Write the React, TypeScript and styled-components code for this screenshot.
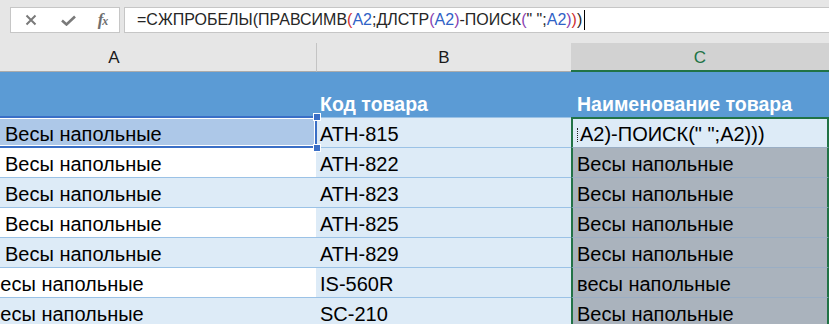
import React from "react";
import styled, { createGlobalStyle } from "styled-components";

const GlobalStyle = createGlobalStyle`
  body {
    margin: 0;
    background: #e6e6e6;
    font-family: "Liberation Sans", Arial, sans-serif;
  }
`;

const Window = styled.div`
  width: 829px;
  height: 324px;
  overflow: hidden;
  background: #e6e6e6;
`;

const FormulaBar = styled.div`
  display: flex;
  align-items: flex-start;
  gap: 4px;
  height: 43px;
  padding: 7px 0 0 10px;
  box-sizing: border-box;
`;

const FnBox = styled.div`
  display: grid;
  grid-template-columns: 39px 36px 33px;
  align-items: center;
  justify-items: center;
  width: 110px;
  height: 26px;
  box-sizing: border-box;
  border: 1px solid #c6c6c6;
  background: #ffffff;
  color: #7a7a7a;
`;

const FxLabel = styled.span`
  font-family: "Liberation Serif", "DejaVu Serif", serif;
  font-style: italic;
  font-weight: bold;
  font-size: 17px;
  line-height: 20px;
  color: #6f6f6f;
  letter-spacing: -1px;
  & small {
    font-size: 12px;
  }
`;

const FormulaInput = styled.div`
  flex: 1;
  height: 26px;
  margin-right: -2px;
  box-sizing: border-box;
  border: 1px solid #c6c6c6;
  background: #ffffff;
  padding-left: 12px;
  font-size: 16px;
  line-height: 24px;
  color: #262626;
  white-space: nowrap;
  display: flex;
  align-items: center;
`;

const Tok = styled.span<{ $c?: string }>`
  color: ${(p) => p.$c || "#262626"};
`;

const Caret = styled.span`
  display: inline-block;
  width: 1px;
  height: 20px;
  margin-left: 2px;
  background: #000000;
`;

const ColumnHeaders = styled.div`
  display: grid;
  grid-template-columns: 316px 255px 258px;
  height: 29px;
`;

const ColHead = styled.div<{ $active?: boolean; $left?: boolean; $shift?: number }>`
  box-sizing: border-box;
  height: 29px;
  padding-top: 3px;
  padding-right: ${(p) => p.$shift || 0}px;
  line-height: 24px;
  text-align: center;
  font-size: 17px;
  color: ${(p) => (p.$active ? "#217346" : "#1a1a1a")};
  background: ${(p) => (p.$active ? "#d2d2d2" : "#e6e6e6")};
  border-bottom: ${(p) => (p.$active ? "2px solid #217346" : "1px solid #ababab")};
  border-left: ${(p) => (p.$left ? "1px solid #c4c4c4" : "none")};
`;

const Grid = styled.div`
  display: grid;
  grid-template-columns: 316px 255px 258px;
`;

const HeadCell = styled.div<{ $pad?: number }>`
  height: 45px;
  box-sizing: border-box;
  background: #5b9bd5;
  color: #ffffff;
  font-weight: bold;
  font-size: 19.5px;
  line-height: 20px;
  padding: 0 0 3px ${(p) => p.$pad || 0}px;
  display: flex;
  align-items: flex-end;
  white-space: nowrap;
`;

const Cell = styled.div<{
  $bg: string;
  $line?: string;
  $frame?: boolean;
  $top?: boolean;
}>`
  position: relative;
  height: 30px;
  box-sizing: border-box;
  background: ${(p) => p.$bg};
  border-top: ${(p) => (p.$top ? "2px solid #217346" : `1px solid ${p.$line || "#9bc2e6"}`)};
  border-left: ${(p) => (p.$frame ? "2px solid #217346" : "none")};
  border-right: ${(p) => (p.$frame ? "2px solid #217346" : "none")};
  padding-top: ${(p) => (p.$top ? 2 : 3)}px;
  padding-left: 4px;
  font-size: 20px;
  line-height: 26px;
  color: #000000;
  white-space: nowrap;
`;

const CellText = styled.span<{ $indent?: number }>`
  display: inline-block;
  margin-left: ${(p) => p.$indent || 0}px;
`;

const Clip = styled.div`
  overflow: hidden;
  margin-left: -4px;
  padding-left: 4px;
`;

const RangeFrame = styled.div`
  position: absolute;
  top: -2px;
  left: -4px;
  right: -1px;
  bottom: -1px;
  border: 2px solid #3a6fc6;
  box-shadow: inset 0 0 0 1px #ffffff;
  z-index: 2;
`;

const Handle = styled.div<{ $pos: "top" | "bottom" }>`
  position: absolute;
  right: -5px;
  ${(p) => (p.$pos === "top" ? "top: -5px;" : "bottom: -5px;")}
  width: 6px;
  height: 6px;
  background: #3a6fc6;
  border: 1px solid #ffffff;
  z-index: 3;
`;

const EditMark = styled.span`
  display: inline-block;
  width: 0;
  height: 14px;
  margin-right: 2px;
  border-left: 1px dotted #222222;
  vertical-align: -1px;
`;

type Row = { a: string; aBg: string; aIndent: number; b: string; c: string };

const WHITE = "#ffffff";
const BAND = "#ddebf7";

const rows: Row[] = [
  { a: "Весы напольные", aBg: "#adc8e8", aIndent: 1, b: "ATH-815", c: "" },
  { a: "Весы напольные", aBg: WHITE, aIndent: 1, b: "ATH-822", c: "Весы напольные" },
  { a: "Весы напольные", aBg: BAND, aIndent: 1, b: "ATH-823", c: "Весы напольные" },
  { a: "Весы напольные", aBg: WHITE, aIndent: 1, b: "ATH-825", c: "Весы напольные" },
  { a: "Весы напольные", aBg: BAND, aIndent: 1, b: "ATH-829", c: "Весы напольные" },
  { a: "Весы напольные", aBg: WHITE, aIndent: -17, b: "IS-560R", c: "весы напольные" },
  { a: "Весы напольные", aBg: BAND, aIndent: -17, b: "SC-210", c: "Весы напольные" },
];

const CrossIcon = () => (
  <svg width="12" height="12" viewBox="0 0 12 12">
    <path d="M1.5 1.5 L10.5 10.5 M10.5 1.5 L1.5 10.5" stroke="#7a7a7a" strokeWidth="2" fill="none" />
  </svg>
);

const CheckIcon = () => (
  <svg width="15" height="11" viewBox="0 0 15 11">
    <path d="M1 5.5 L5.5 9.5 L14 1.5" stroke="#7a7a7a" strokeWidth="2.6" fill="none" />
  </svg>
);

export default function App() {
  return (
    <Window>
      <GlobalStyle />
      <FormulaBar>
        <FnBox>
          <CrossIcon />
          <CheckIcon />
          <FxLabel>
            f<small>x</small>
          </FxLabel>
        </FnBox>
        <FormulaInput>
          <Tok>=СЖПРОБЕЛЫ(ПРАВСИМВ</Tok>
          <Tok $c="#d03030">(</Tok>
          <Tok $c="#2f62c6">A2</Tok>
          <Tok>;ДЛСТР</Tok>
          <Tok $c="#8a3fb0">(</Tok>
          <Tok $c="#2f62c6">A2</Tok>
          <Tok $c="#8a3fb0">)</Tok>
          <Tok>-ПОИСК</Tok>
          <Tok $c="#8a3fb0">(</Tok>
          <Tok>" ";</Tok>
          <Tok $c="#2f62c6">A2</Tok>
          <Tok $c="#8a3fb0">)</Tok>
          <Tok $c="#d03030">)</Tok>
          <Tok>)</Tok>
          <Caret />
        </FormulaInput>
      </FormulaBar>

      <ColumnHeaders>
        <ColHead $shift={88}>A</ColHead>
        <ColHead $left>B</ColHead>
        <ColHead $active>C</ColHead>
      </ColumnHeaders>

      <Grid>
        <HeadCell />
        <HeadCell $pad={4}>Код товара</HeadCell>
        <HeadCell $pad={6}>Наименование товара</HeadCell>

        {rows.map((r, i) => (
          <React.Fragment key={i}>
            <Cell $bg={r.aBg}>
              {i === 0 ? (
                <>
                  <CellText $indent={r.aIndent}>{r.a}</CellText>
                  <RangeFrame />
                  <Handle $pos="top" />
                  <Handle $pos="bottom" />
                </>
              ) : (
                <Clip>
                  <CellText $indent={r.aIndent}>{r.a}</CellText>
                </Clip>
              )}
            </Cell>
            <Cell $bg={BAND}>{r.b}</Cell>
            {i === 0 ? (
              <Cell $bg={BAND} $frame $top>
                <EditMark />
                A2)-ПОИСК(" ";A2)))
              </Cell>
            ) : (
              <Cell $bg="#aab3bd" $line="#9aaec4" $frame>
                {r.c}
              </Cell>
            )}
          </React.Fragment>
        ))}
      </Grid>
    </Window>
  );
}
